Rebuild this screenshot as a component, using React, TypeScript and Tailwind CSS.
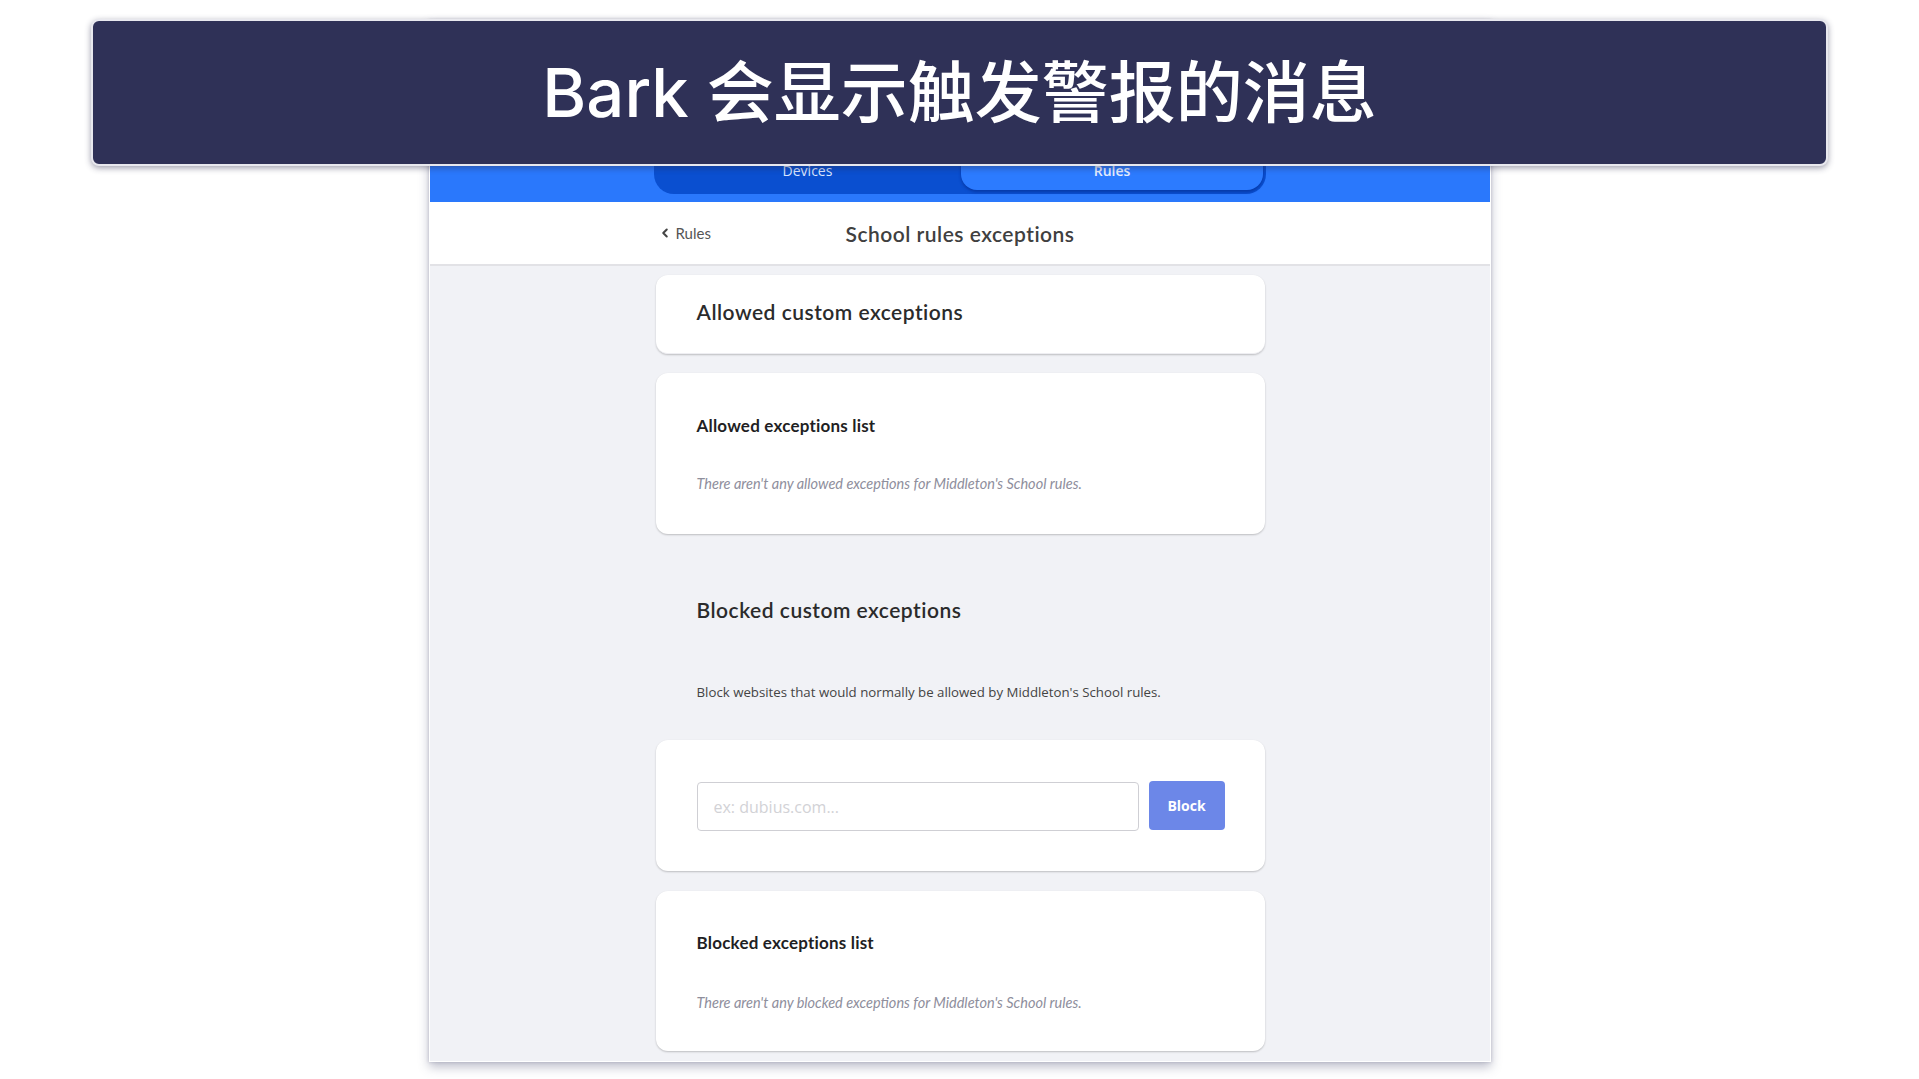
import React from "react";
import { ChevronLeft } from "lucide-react";

const head = { fontFamily: "Lato, 'Open Sans', sans-serif" };
const body = { fontFamily: "'Open Sans', 'Noto Sans', sans-serif" };

export default function App() {
  return (
    <div className="relative w-[1919px] h-[1079px] overflow-hidden bg-white">
      {/* App frame */}
      <div className="ml-[429px] mt-[20px] w-[1062px] h-[1042px] bg-[#f1f2f6] flex flex-col shadow-[0_5px_10px_rgba(70,72,110,0.35),0_0_3px_rgba(70,72,110,0.25)] border-x border-b border-white">
        {/* Blue nav bar */}
        <div className="h-[182px] bg-[#2a78fc] flex items-end justify-center pb-[8px]">
          <div className="w-[612px] h-[50px] bg-[#0a4fd0] rounded-b-[20px] flex pb-[4px] pr-[3px]" style={body}>
            <div className="flex-1 flex items-center justify-center pt-[6px] text-[14px] text-[#dbe6ff]">Devices</div>
            <div className="w-[302px] bg-[#2c7bff] rounded-b-[16px] flex items-center justify-center pt-[6px] text-[14px] font-semibold text-[#e6eeff] shadow-[0_2px_3px_rgba(0,30,120,0.45)]">
              Rules
            </div>
          </div>
        </div>
        {/* Header */}
        <div className="h-[64px] bg-white border-b-2 border-[#e2e2e6] shrink-0">
          <div className="w-[609px] mx-auto h-full grid grid-cols-[1fr_auto_1fr] items-center">
            <div className="flex items-center gap-[4px] pl-[2px] text-[#555] text-[15px]" style={head}>
              <ChevronLeft size={14} strokeWidth={3.5} className="text-[#444]" />
              <span>Rules</span>
            </div>
            <div className="pt-[2px] text-[21px] font-semibold text-[#404040] tracking-[0.5px]" style={head}>
              School rules exceptions
            </div>
            <div />
          </div>
        </div>
        {/* Content */}
        <div className="w-[609px] mx-auto flex flex-col pt-[9px]">
          <div className="h-[79px] bg-white rounded-[12px] shadow-[0_1px_2px_rgba(0,0,0,0.22)] pl-[41px] pt-[23px] border-b border-[#eeeef2]">
            <div className="text-[21px] leading-[28px] font-semibold tracking-[0.5px] text-[#2b2b2b]" style={head}>
              Allowed custom exceptions
            </div>
          </div>

          <div className="mt-[19px] h-[161px] bg-white rounded-[12px] shadow-[0_1px_2px_rgba(0,0,0,0.22)] pl-[41px] pt-[42px]">
            <div className="text-[17px] leading-[22px] font-bold tracking-[0.2px] text-[#1f1f24]" style={head}>
              Allowed exceptions list
            </div>
            <div className="mt-[38px] text-[14.5px] leading-[18px] italic text-[#8e8e9c]" style={head}>
              There aren't any allowed exceptions for Middleton's School rules.
            </div>
          </div>

          <div className="mt-[62px] pl-[41px] text-[21px] leading-[28px] font-semibold tracking-[0.5px] text-[#2b2b2b]" style={head}>
            Blocked custom exceptions
          </div>
          <div className="mt-[59px] pl-[41px] text-[13.25px] leading-[18px] text-[#444]" style={body}>
            Block websites that would normally be allowed by Middleton's School rules.
          </div>

          <div className="mt-[39px] h-[131px] bg-white rounded-[12px] shadow-[0_1px_2px_rgba(0,0,0,0.22)] pl-[41px] pr-[40px] pt-[42px] flex items-start gap-[10px]">
            <div className="w-[442px] h-[49px] border border-[#cfcfd4] rounded-[4px] flex items-center pl-[16px] text-[16px] text-[#d2d2d6]" style={body}>
              ex: dubius.com...
            </div>
            <button className="w-[76px] h-[49px] -mt-[1px] bg-[#6c87e8] rounded-[4px] text-white text-[14px] font-bold" style={body}>
              Block
            </button>
          </div>

          <div className="mt-[20px] h-[160px] bg-white rounded-[12px] shadow-[0_1px_2px_rgba(0,0,0,0.22)] pl-[41px] pt-[41px]">
            <div className="text-[17px] leading-[22px] font-bold tracking-[0.2px] text-[#1f1f24]" style={head}>
              Blocked exceptions list
            </div>
            <div className="mt-[40px] text-[14.5px] leading-[18px] italic text-[#8e8e9c]" style={head}>
              There aren't any blocked exceptions for Middleton's School rules.
            </div>
          </div>
        </div>
      </div>

      {/* Overlay banner */}
      <div className="absolute left-[91px] top-[19px] w-[1737px] h-[147px] rounded-[8px] bg-[#2f3157] border-2 border-[#e8e8ee] shadow-[0_2px_6px_rgba(40,40,70,0.45)] flex items-center justify-center">
        <div
          className="text-white text-[67px] leading-none font-medium"
          style={{ fontFamily: "Inter, 'Noto Sans CJK SC', sans-serif" }}
        >
          Bark 会显示触发警报的消息
        </div>
      </div>
    </div>
  );
}
